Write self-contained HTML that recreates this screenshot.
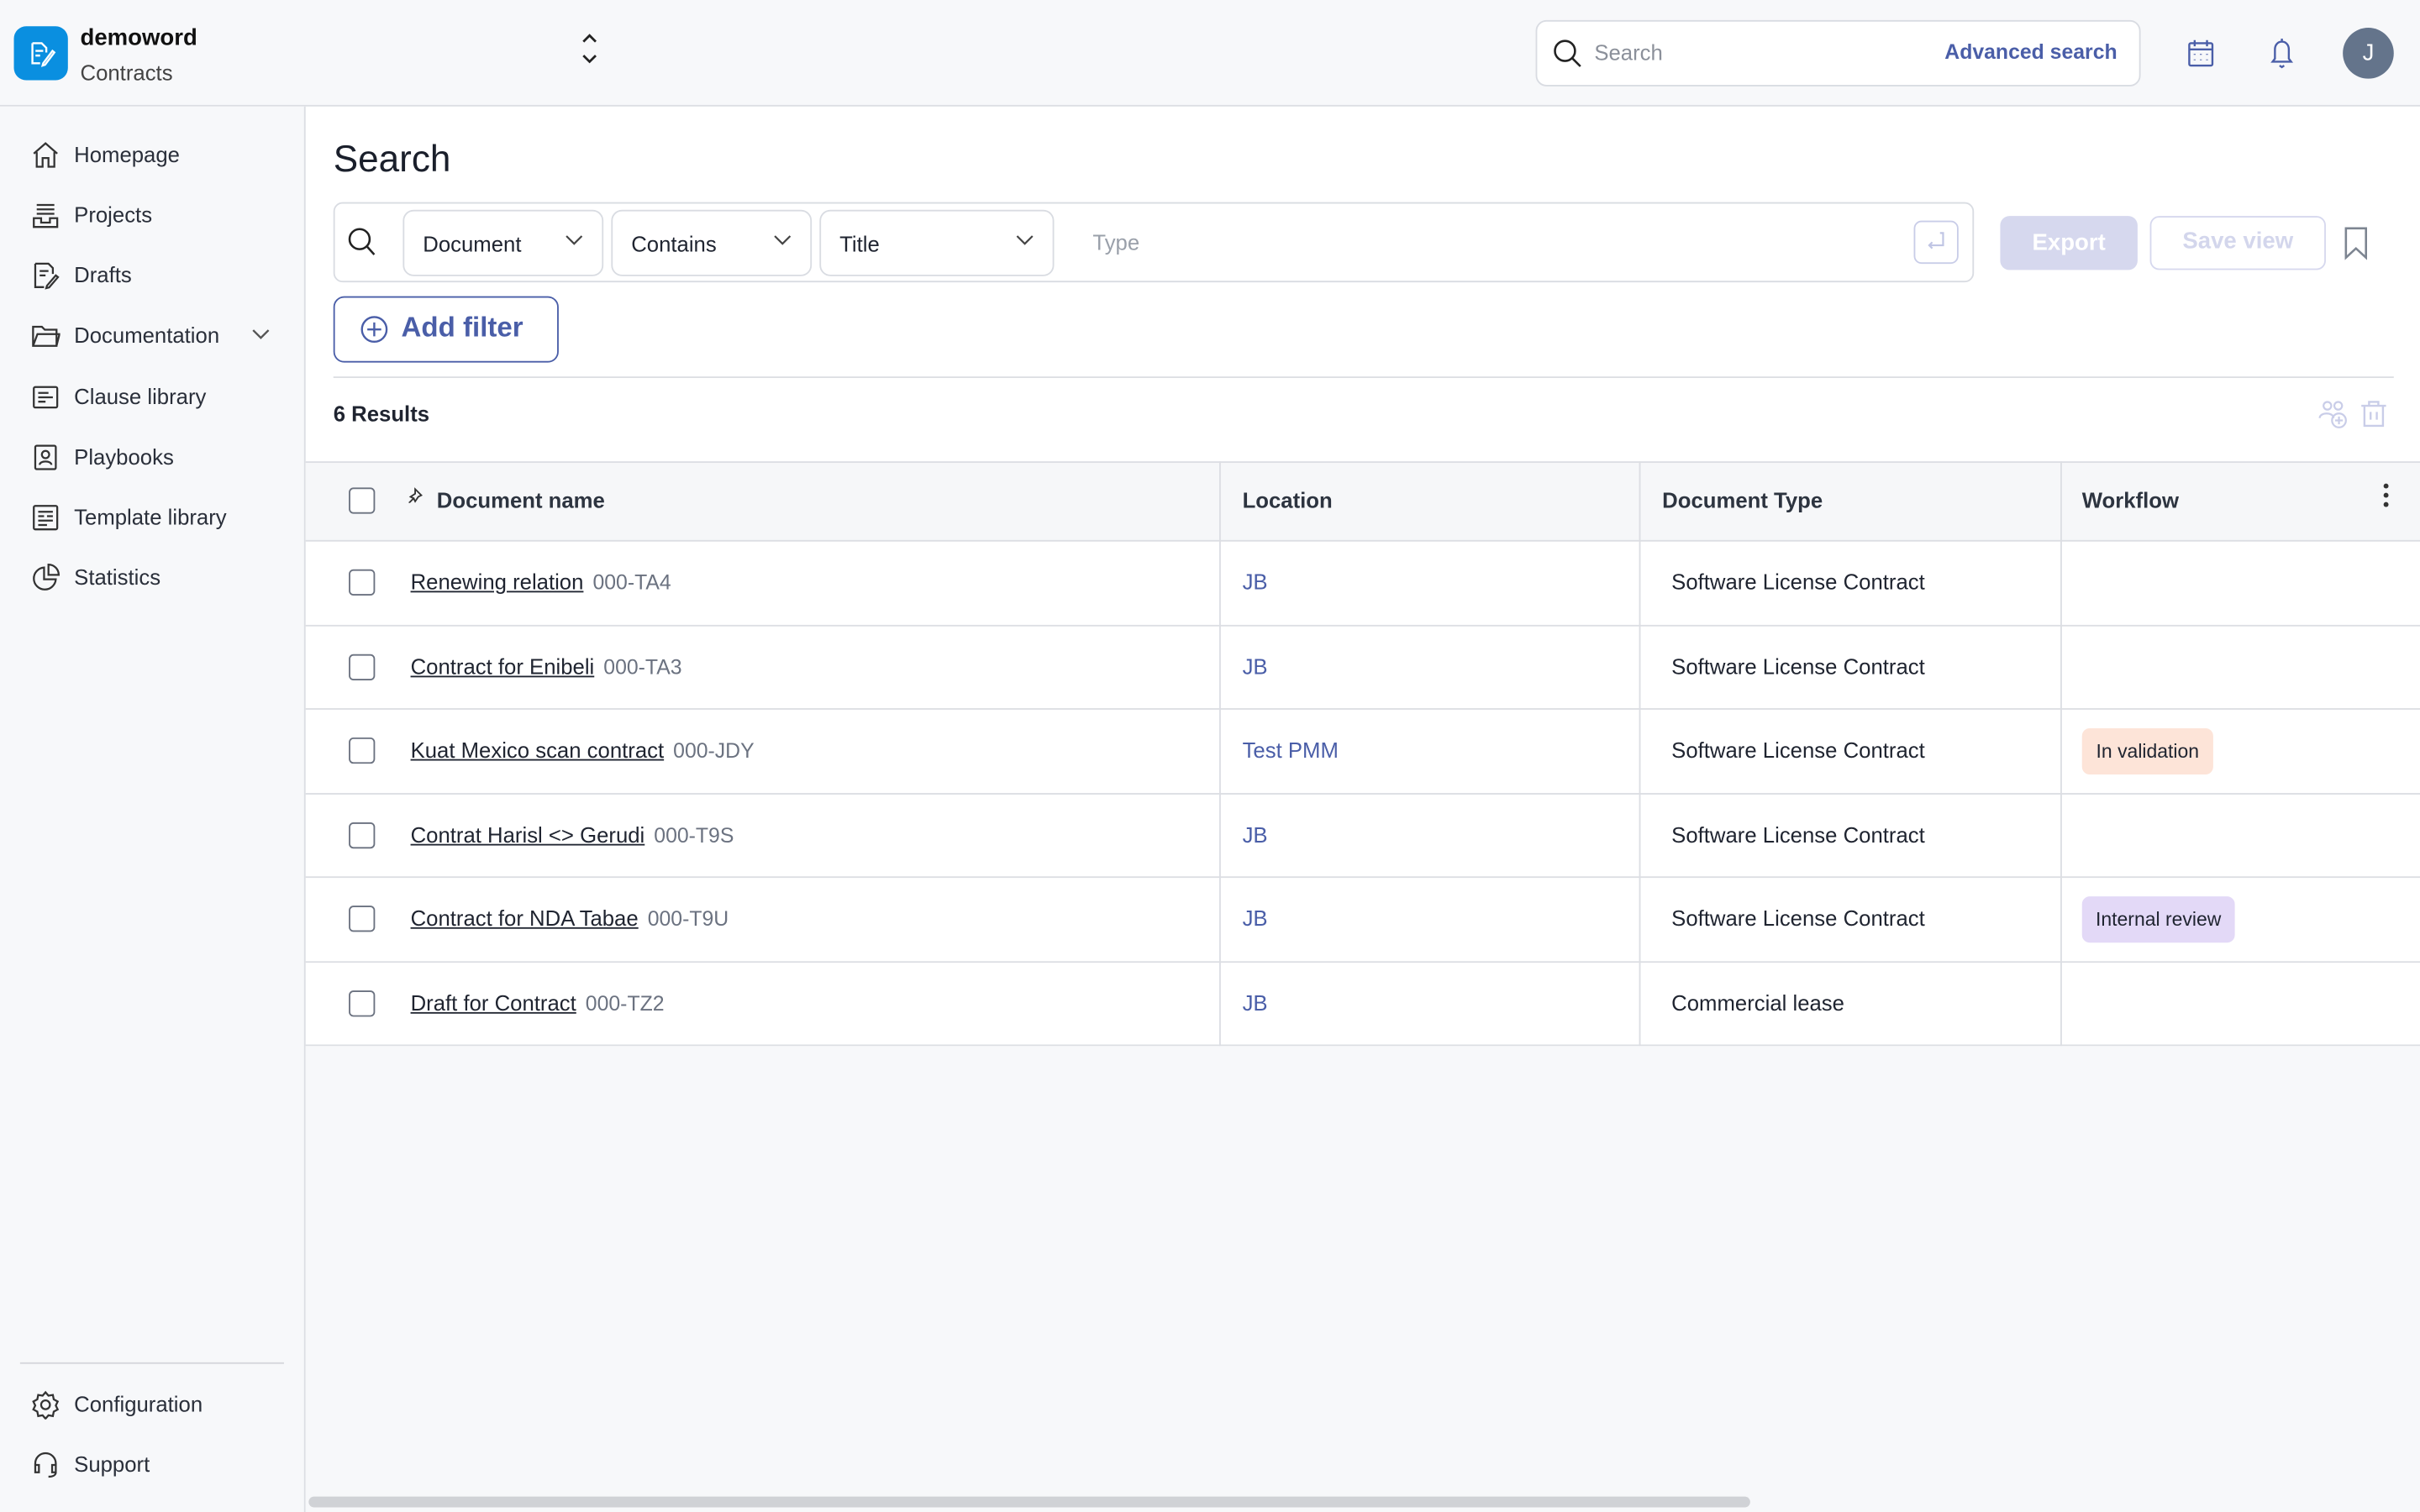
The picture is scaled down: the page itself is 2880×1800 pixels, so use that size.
<!DOCTYPE html>
<html><head><meta charset="utf-8"><style>
*{box-sizing:border-box;margin:0;padding:0}
html,body{width:2880px;height:1800px;overflow:hidden;background:#fff}
#w{width:1568px;height:980px;transform:scale(1.836735);transform-origin:0 0;position:relative;font-family:"Liberation Sans",sans-serif;color:#1f2430;font-size:14px}
.a{position:absolute}
.top{left:0;top:0;width:1568px;height:69px;background:#f7f8fa;border-bottom:1px solid #dcdee3}
.side{left:0;top:69px;width:198px;height:911px;background:#f7f8fa;border-right:1px solid #dcdee3}
.nav{left:20px;font-size:14px;color:#2a2f3a;display:flex;align-items:center;gap:9px;height:20px}
.nav svg{width:19px;height:19px}
.sel{top:136px;height:43px;border:1px solid #d9dce2;border-radius:7px;font-size:14px;display:flex;align-items:center;padding-left:12px}
.sel svg{position:absolute;right:12px;top:15px}
.row{left:198px;width:1370px;height:55px;border-bottom:1px solid #dcdee3}
.cb{width:17px;height:17px;border:1.5px solid #6b7280;border-radius:3px;background:#fff}
.t{font-size:14px}
.lk{text-decoration:underline;color:#1f2430}
.code{color:#6b7280;margin-left:6px;font-size:13.5px}
.bl{color:#4a5ea8}
</style></head><body><div id="w">
<div class="a top"></div>
<div class="a" style="left:9px;top:17px;width:35px;height:35px;background:#0a8fe0;border-radius:8px"></div>
<svg class="a" style="left:17px;top:25px" width="20" height="20" viewBox="0 0 20 20" fill="none" stroke="#fff" stroke-width="1.3"><path d="M4 3h6l3 3v3M4 3v13h5M6 8h5M6 11h3"/><path d="M11 16l6-8 1.2 1-6 8-1.6.5z"/></svg>
<div class="a" style="left:52px;top:16px;font-size:15px;font-weight:bold;color:#111">demoword</div>
<div class="a" style="left:52px;top:39px;font-size:14px;color:#444">Contracts</div>
<svg class="a" style="left:376px;top:21px" width="12" height="22" viewBox="0 0 12 22" fill="none" stroke="#222" stroke-width="1.5"><path d="M2 6l4-4 4 4M2 15l4 4 4-4"/></svg>
<div class="a" style="left:995px;top:13px;width:392px;height:43px;background:#fff;border:1px solid #d9dce2;border-radius:7px"></div>
<svg class="a" style="left:1006px;top:25px" width="20" height="20" viewBox="0 0 20 20" fill="none" stroke="#222" stroke-width="1.4"><circle cx="8" cy="8" r="6.5"/><path d="M13 13l5 5"/></svg>
<div class="a" style="left:1033px;top:26px;color:#8b909a;font-size:14px">Search</div>
<div class="a" style="left:1260px;top:26px;color:#4a5ea8;font-size:13.5px;font-weight:bold">Advanced search</div>
<svg class="a" style="left:1417px;top:25px" width="18" height="19" viewBox="0 0 18 19" fill="none" stroke="#4a5ea8" stroke-width="1.3"><rect x="1.5" y="3" width="15" height="14.5" rx="1"/><path d="M1.5 7h15M5 1v4M13 1v4"/><path d="M5 10v.5M9 10v.5M13 10v.5M5 13.5v.5M9 13.5v.5M13 13.5v.5"/></svg>
<svg class="a" style="left:1470px;top:25px" width="17" height="20" viewBox="0 0 17 20" fill="none" stroke="#4a5ea8" stroke-width="1.3"><path d="M8.5 2c-3 0-4.5 2.5-4.5 5v6l-1.5 2h12L13 13V7c0-2.5-1.5-5-4.5-5zM8.5 0v2M7 17.5l1.5 1 1.5-1"/></svg>
<div class="a" style="left:1518px;top:18px;width:33px;height:33px;border-radius:50%;background:#64748b;color:#fff;font-size:15px;text-align:center;line-height:33px">J</div>

<div class="a side"></div>
<div class="a nav" style="top:90px"><svg viewBox="0 0 20 20" fill="none" stroke="#333" stroke-width="1.3"><path d="M2 9l8-7 8 7M4 8v10h4v-6h4v6h4V8"/></svg>Homepage</div>
<div class="a nav" style="top:129px"><svg viewBox="0 0 20 20" fill="none" stroke="#333" stroke-width="1.3"><path d="M4 3h12M4 6h12M4 9h12M2 12h5v3h6v-3h5v6H2z"/></svg>Projects</div>
<div class="a nav" style="top:168px"><svg viewBox="0 0 20 20" fill="none" stroke="#333" stroke-width="1.3"><path d="M3 2h9l3 3v4M3 2v16h6M6 7h6M6 10h4M11 17l6-7 1.5 1.2-6 7-2 .5z"/></svg>Drafts</div>
<div class="a nav" style="top:207px"><svg viewBox="0 0 20 20" fill="none" stroke="#333" stroke-width="1.3"><path d="M1.5 4h6l2 2h8v11h-16zM1.5 17l3-8h15l-2 8"/></svg>Documentation</div>
<svg class="a" style="left:163px;top:213px" width="12" height="8" viewBox="0 0 12 8" fill="none" stroke="#555" stroke-width="1.3"><path d="M1 1l5 5 5-5"/></svg>
<div class="a nav" style="top:247px"><svg viewBox="0 0 20 20" fill="none" stroke="#333" stroke-width="1.3"><rect x="2" y="3" width="16" height="14" rx="1"/><path d="M5 7h7M5 10h10M5 13h5"/></svg>Clause library</div>
<div class="a nav" style="top:286px"><svg viewBox="0 0 20 20" fill="none" stroke="#333" stroke-width="1.3"><rect x="3" y="2" width="14" height="16" rx="1"/><circle cx="10" cy="8" r="2.5"/><path d="M6 15c0-3 8-3 8 0"/></svg>Playbooks</div>
<div class="a nav" style="top:325px"><svg viewBox="0 0 20 20" fill="none" stroke="#333" stroke-width="1.3"><rect x="2" y="2" width="16" height="16" rx="1"/><path d="M5 6h10M5 9h4M11 9h4M5 12h10M5 15h6"/></svg>Template library</div>
<div class="a nav" style="top:364px"><svg viewBox="0 0 20 20" fill="none" stroke="#333" stroke-width="1.3"><path d="M9 3a7.5 7.5 0 1 0 8 8H9zM12 1v7h7a7 7 0 0 0-7-7z"/></svg>Statistics</div>
<div class="a" style="left:13px;top:883px;width:171px;height:1px;background:#d4d6db"></div>
<div class="a nav" style="top:900px"><svg viewBox="0 0 20 20" fill="none" stroke="#333" stroke-width="1.3"><circle cx="10" cy="10" r="3"/><path d="M10 1.5l2 2.3 3-.5.6 3 2.7 1.5-1.3 2.7 1.3 2.7-2.7 1.5-.6 3-3-.5-2 2.3-2-2.3-3 .5-.6-3-2.7-1.5L3 10.5 1.7 7.8l2.7-1.5.6-3 3 .5z"/></svg>Configuration</div>
<div class="a nav" style="top:939px"><svg viewBox="0 0 20 20" fill="none" stroke="#333" stroke-width="1.3"><path d="M3 11V9a7 7 0 0 1 14 0v2M3 10h2.5v5H3zM14.5 10H17v5h-2.5zM17 15c0 2-2 3-5 3"/></svg>Support</div>

<div class="a" style="left:216px;top:90px;font-size:24px;color:#1a1f2b">Search</div>
<div class="a" style="left:216px;top:131px;width:1063px;height:52px;border:1px solid #d9dce2;border-radius:6px"></div>
<svg class="a" style="left:225px;top:147px" width="20" height="20" viewBox="0 0 20 20" fill="none" stroke="#222" stroke-width="1.4"><circle cx="8" cy="8" r="6.5"/><path d="M13 13l4.5 5"/></svg>
<div class="a sel" style="left:261px;width:130px">Document<svg width="12" height="8" viewBox="0 0 12 8" fill="none" stroke="#444" stroke-width="1.2"><path d="M1 1l5 5 5-5"/></svg></div>
<div class="a sel" style="left:396px;width:130px">Contains<svg width="12" height="8" viewBox="0 0 12 8" fill="none" stroke="#444" stroke-width="1.2"><path d="M1 1l5 5 5-5"/></svg></div>
<div class="a sel" style="left:531px;width:152px">Title<svg width="12" height="8" viewBox="0 0 12 8" fill="none" stroke="#444" stroke-width="1.2"><path d="M1 1l5 5 5-5"/></svg></div>
<div class="a" style="left:708px;top:149px;color:#9aa0aa">Type</div>
<div class="a" style="left:1240px;top:143px;width:29px;height:28px;border:1px solid #c9cde8;border-radius:5px"></div>
<svg class="a" style="left:1246px;top:148px" width="17" height="18" viewBox="0 0 17 18" fill="none" stroke="#c0c5e4" stroke-width="1.2"><path d="M11 3h2v8H4M6 9l-2 2 2 2"/></svg>
<div class="a" style="left:1296px;top:140px;width:89px;height:35px;background:#d6d8ee;border-radius:6px;color:#fff;font-weight:bold;font-size:15px;text-align:center;line-height:35px">Export</div>
<div class="a" style="left:1393px;top:140px;width:114px;height:35px;border:1.5px solid #d6d8ee;border-radius:6px;color:#d3d6ec;font-weight:bold;font-size:15px;text-align:center;line-height:32px">Save view</div>
<svg class="a" style="left:1518px;top:146px" width="17" height="23" viewBox="0 0 17 23" fill="none" stroke="#7d8591" stroke-width="1.4"><path d="M2 2h13v19l-6.5-6L2 21z"/></svg>
<div class="a" style="left:216px;top:192px;width:146px;height:43px;border:1.5px solid #4a5ea8;border-radius:7px"></div>
<svg class="a" style="left:233px;top:204px" width="19" height="19" viewBox="0 0 19 19" fill="none" stroke="#4a5ea8" stroke-width="1.3"><circle cx="9.5" cy="9.5" r="8"/><path d="M9.5 5v9M5 9.5h9"/></svg>
<div class="a" style="left:260px;top:202px;color:#4a5ea8;font-size:18px;font-weight:bold">Add filter</div>
<div class="a" style="left:216px;top:244px;width:1335px;height:1px;background:#dcdee3"></div>
<div class="a" style="left:216px;top:260px;font-weight:bold;font-size:14px">6 Results</div>
<svg class="a" style="left:1502px;top:259px" width="20" height="20" viewBox="0 0 20 20" fill="none" stroke="#c9cde8" stroke-width="1.2"><circle cx="6" cy="4" r="2.5"/><circle cx="13" cy="4" r="2.5"/><path d="M1 12c0-4 9-4 9 0"/><circle cx="13.5" cy="13.5" r="4.5"/><path d="M13.5 11v5M11 13.5h5"/></svg>
<svg class="a" style="left:1529px;top:259px" width="18" height="19" viewBox="0 0 18 19" fill="none" stroke="#c9cde8" stroke-width="1.3"><path d="M1 4h16M6 4V1.5h6V4M3 4v13h12V4M7 8v5M11 8v5"/></svg>

<div class="a" style="left:198px;top:299px;width:1370px;height:52px;background:#f6f7f9;border-top:1px solid #dcdee3;border-bottom:1px solid #dcdee3"></div>
<div class="a cb" style="left:226px;top:316px"></div>
<svg class="a" style="left:264px;top:316px" width="10" height="10" viewBox="0 0 10 10" fill="none" stroke="#333" stroke-width="1"><path d="M5 1l4 4-2 1-2 3-1-2-3 3 3-3-2-1 3-2z"/></svg>
<div class="a" style="left:283px;top:316px;font-weight:bold;color:#2d3440">Document name</div>
<div class="a" style="left:805px;top:316px;font-weight:bold;color:#2d3440">Location</div>
<div class="a" style="left:1077px;top:316px;font-weight:bold;color:#2d3440">Document Type</div>
<div class="a" style="left:1349px;top:316px;font-weight:bold;color:#2d3440">Workflow</div>
<svg class="a" style="left:1542px;top:312px" width="8" height="18" viewBox="0 0 8 18"><circle cx="4" cy="3" r="1.6" fill="#333"/><circle cx="4" cy="9" r="1.6" fill="#333"/><circle cx="4" cy="15" r="1.6" fill="#333"/></svg>

<div class="a row" style="top:351px"></div>
<div class="a row" style="top:405px"></div>
<div class="a row" style="top:460px"></div>
<div class="a row" style="top:514px"></div>
<div class="a row" style="top:569px"></div>
<div class="a row" style="top:623px"></div>
<div class="a" style="left:790px;top:299px;width:1px;height:379px;background:#dcdee3"></div>
<div class="a" style="left:1062px;top:299px;width:1px;height:379px;background:#dcdee3"></div>
<div class="a" style="left:1335px;top:299px;width:1px;height:379px;background:#dcdee3"></div>

<div class="a cb" style="left:226px;top:369px"></div>
<div class="a t" style="left:266px;top:369px"><span class="lk">Renewing relation</span><span class="code">000-TA4</span></div>
<div class="a t bl" style="left:805px;top:369px">JB</div>
<div class="a t" style="left:1083px;top:369px">Software License Contract</div>

<div class="a cb" style="left:226px;top:424px"></div>
<div class="a t" style="left:266px;top:424px"><span class="lk">Contract for Enibeli</span><span class="code">000-TA3</span></div>
<div class="a t bl" style="left:805px;top:424px">JB</div>
<div class="a t" style="left:1083px;top:424px">Software License Contract</div>

<div class="a cb" style="left:226px;top:478px"></div>
<div class="a t" style="left:266px;top:478px"><span class="lk">Kuat Mexico scan contract</span><span class="code">000-JDY</span></div>
<div class="a t bl" style="left:805px;top:478px">Test PMM</div>
<div class="a t" style="left:1083px;top:478px">Software License Contract</div>
<div class="a" style="left:1349px;top:472px;width:85px;height:30px;background:#fde4d8;border-radius:5px;font-size:12.5px;line-height:30px;text-align:center">In validation</div>

<div class="a cb" style="left:226px;top:533px"></div>
<div class="a t" style="left:266px;top:533px"><span class="lk">Contrat Harisl &lt;&gt; Gerudi</span><span class="code">000-T9S</span></div>
<div class="a t bl" style="left:805px;top:533px">JB</div>
<div class="a t" style="left:1083px;top:533px">Software License Contract</div>

<div class="a cb" style="left:226px;top:587px"></div>
<div class="a t" style="left:266px;top:587px"><span class="lk">Contract for NDA Tabae</span><span class="code">000-T9U</span></div>
<div class="a t bl" style="left:805px;top:587px">JB</div>
<div class="a t" style="left:1083px;top:587px">Software License Contract</div>
<div class="a" style="left:1349px;top:581px;width:99px;height:30px;background:#e3d9f7;border-radius:5px;font-size:12.5px;line-height:30px;text-align:center">Internal review</div>

<div class="a cb" style="left:226px;top:642px"></div>
<div class="a t" style="left:266px;top:642px"><span class="lk">Draft for Contract</span><span class="code">000-TZ2</span></div>
<div class="a t bl" style="left:805px;top:642px">JB</div>
<div class="a t" style="left:1083px;top:642px">Commercial lease</div>

<div class="a" style="left:198px;top:678px;width:1370px;height:302px;background:#f7f8fa"></div>
<div class="a" style="left:200px;top:970px;width:934px;height:7px;border-radius:4px;background:#d0d2d6"></div>
</div></body></html>
